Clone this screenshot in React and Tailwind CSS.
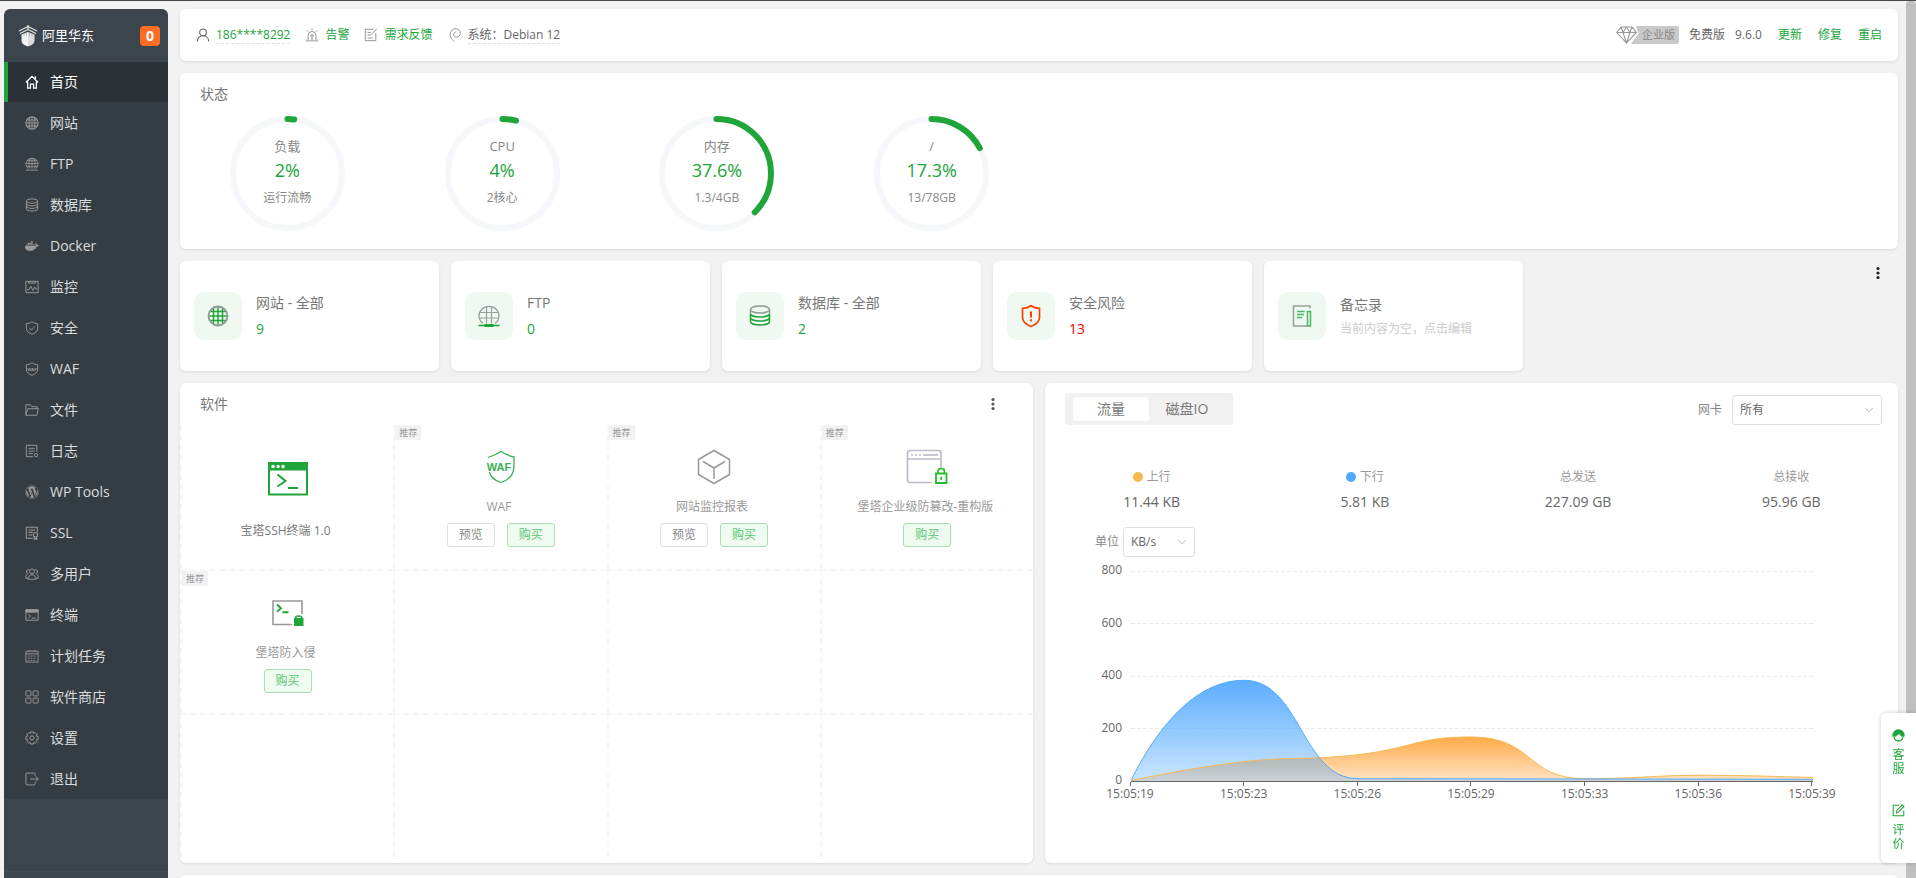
import React, { useState } from 'react';
import { FaDocker, FaWordpress } from 'react-icons/fa';

// --- Icons ---
function Icon({ size = 14, box = 16, width = 1, className = '', children }) {
    return (
        <svg width={size} height={size} viewBox={`0 0 ${box} ${box}`} fill="none" stroke="currentColor" strokeWidth={width} className={`shrink-0 ${className}`} aria-hidden="true">
            {children}
        </svg>
    );
}

const HomeIcon = () => (
    <Icon width={1.5}>
        <path d="M1 8.5 8 1.5l7 7M11.8 1.5v3M3 7.5V15h3.2v-4.5h3.6V15H13V7.5" />
    </Icon>
);

const GlobeIcon = () => (
    <Icon width={1.2}>
        <circle cx="8" cy="8" r="7" />
        <path d="M1 8h14M2 4.5h12M2 11.5h12M8 1v14M4.8 2v12M11.2 2v12" />
    </Icon>
);

const FtpIcon = () => (
    <Icon>
        <path d="M4 13.5a7 6.6 0 1 1 8 0" />
        <path d="M1.2 7.5h13.6M2.5 4.2h11M2.3 11h11.4M8 1v12.5M5 13C4 9 4.200 5 6 1.500M11 13c1-4 .8-8-1-11.500M1 15h14" />
    </Icon>
);

const DatabaseIcon = () => (
    <Icon width={1.1}>
        <ellipse cx="8" cy="3.500" rx="6.500" ry="2.400" />
        <path d="M1.500 3.500v9c0 1.300 2.900 2.400 6.500 2.400s6.500-1.100 6.500-2.400v-9M1.500 6.500c0 1.300 2.900 2.400 6.500 2.400s6.500-1.100 6.500-2.400M1.500 9.500c0 1.300 2.900 2.400 6.500 2.400s6.500-1.100 6.500-2.400" />
    </Icon>
);

const MonitorIcon = () => (
    <Icon width={1.1}>
        <path d="M1 1.500h14v13H1zM4 1.500v2h8v-2M2 11h2.500l2-4 2.500 5 2-4 1 2h2" />
    </Icon>
);

const ShieldIcon = () => (
    <Icon width={1.1}>
        <path d="M8 .8C6 2.400 3.800 2.900 1.500 3v5.200c0 3.400 3 5.800 6.500 7 3.500-1.200 6.500-3.600 6.500-7V3C12.200 2.900 10 2.400 8 .8zM4.800 8l2.400 2.300 4.200-4.200" />
    </Icon>
);

const WafIcon = () => (
    <Icon width={1.1}>
        <path d="M8 .8C6 2.400 3.800 2.900 1.500 3v5.200c0 3.400 3 5.800 6.500 7 3.500-1.200 6.500-3.600 6.500-7V3C12.200 2.900 10 2.400 8 .8z" />
        <text x="8" y="10" textAnchor="middle" fill="currentColor" stroke="none" className="font-['Liberation_Sans'] text-[5px] font-bold">WAF</text>
    </Icon>
);

const FolderIcon = () => (
    <Icon width={1.1}>
        <path d="M1 14V2h5l1.500 2.200H14v2.300M1 14h12.500L15.300 6.500H3.200L1 14z" />
    </Icon>
);

const LogIcon = () => (
    <Icon width={1.1}>
        <path d="M13.500 9V1.500H1.500v13H9M4 5h7M4 8h7M4 11h5" />
        <circle cx="12.600" cy="12.700" r="1.900" />
    </Icon>
);

const SslIcon = () => (
    <Icon width={1.2}>
        <path d="M14 7V1.500H1.500v12.500H9M4 4.500h7.500M4 7.300h5M4 10.300h4" />
        <circle cx="12" cy="10" r="2.500" />
        <path d="M10.500 12v3.500L12 14.300l1.500 1.200V12" />
    </Icon>
);

const UsersIcon = () => (
    <Icon width={1.1}>
        <circle cx="8" cy="5" r="2.700" />
        <path d="M3.500 14c0-3 1.800-5 4.500-5s4.500 2 4.500 5zM5 3.200a2.300 2.300 0 1 0-1.600 4.300C1.800 8.300.8 10 .8 12.800h2.700M11 3.200a2.300 2.300 0 1 1 1.600 4.300c1.600.8 2.600 2.500 2.600 5.300h-2.700" />
    </Icon>
);

const TerminalIcon = () => (
    <Icon width={1.1}>
        <path d="M1 2h14v12H1z" />
        <path d="M1 2h14v2.800H1z" fill="currentColor" />
        <path d="M4 7.300l2.500 2L4 11.300M7.800 11.500H12" />
    </Icon>
);

const CalendarIcon = () => (
    <Icon>
        <path d="M1 2.500h14v12.500H1zM1 5.500h14M4.500 1v2.500M8 1v2.500M11.500 1v2.500" />
        <path strokeDasharray="2 1.300" d="M3.200 8h10M3.200 10.500h10M3.200 13h10" />
    </Icon>
);

const AppsIcon = () => (
    <Icon width={1.1}>
        <rect x="1" y="1" width="5.800" height="5.800" rx="1" />
        <rect x="9.200" y="1" width="5.800" height="5.800" rx="1" />
        <rect x="1" y="9.200" width="5.800" height="5.800" rx="1" />
        <rect x="9.200" y="9.200" width="5.800" height="5.800" rx="1" />
    </Icon>
);

const GearIcon = () => (
    <Icon width={1.1}>
        <path d="M6.500 1h3l.5 1.900 1.700-1 2.300 2.200-1 1.800 2 .6v3l-2 .6 1 1.800-2.300 2.200-1.700-1-.5 1.900h-3L6 13.100l-1.700 1L2 11.900l1-1.800-2-.6v-3l2-.6-1-1.800 2.300-2.200 1.700 1z" />
        <circle cx="8" cy="8" r="2.400" />
    </Icon>
);

const ExitIcon = () => (
    <Icon width={1.1}>
        <path d="M11.500 4.500V2.500c0-.8-.5-1.300-1.300-1.300H2.300C1.500 1.200 1 1.700 1 2.500v11c0 .8.500 1.300 1.300 1.300h7.900c.8 0 1.300-.5 1.300-1.300v-2M6 8h9M12.200 5l3 3-3 3" />
    </Icon>
);

const LogoIcon = () => (
    <svg width="20" height="22" viewBox="0 0 20 22" className="shrink-0" aria-hidden="true">
        <path d="M10 1.500 1 6M10 1.500 19 6M10 4.500 2 8.500M10 4.500l8 4M10 0v4" fill="none" stroke="#e4e4e4" strokeWidth="1.300" />
        <path d="M10 7 3.500 9.500v6c0 3 3 5 6.500 6z" fill="#f4f4f4" />
        <path d="M10 7l6.500 2.500v6c0 3-3 5-6.500 6z" fill="#dcdddf" />
        <path d="M6 8.500v3M8.500 8v3M11.500 8v3M14 8.500v3" stroke="#9a9ea2" strokeWidth="0.600" />
    </svg>
);

const DotsIcon = () => (
    <svg width="16" height="20" viewBox="0 0 16 20" fill="currentColor" aria-hidden="true">
        <circle cx="8" cy="5.500" r="1.600" />
        <circle cx="8" cy="10" r="1.600" />
        <circle cx="8" cy="14.500" r="1.600" />
    </svg>
);

const ChevronIcon = () => (
    <svg width="10" height="6" viewBox="0 0 10 6" fill="none" stroke="#b4b8bf" aria-hidden="true">
        <path d="M1 .8l4 4 4-4" />
    </svg>
);

// --- Data ---
const MENU = [
    { label: '首页', icon: <HomeIcon /> },
    { label: '网站', icon: <GlobeIcon /> },
    { label: 'FTP', icon: <FtpIcon /> },
    { label: '数据库', icon: <DatabaseIcon /> },
    { label: 'Docker', icon: <FaDocker size={14} /> },
    { label: '监控', icon: <MonitorIcon /> },
    { label: '安全', icon: <ShieldIcon /> },
    { label: 'WAF', icon: <WafIcon /> },
    { label: '文件', icon: <FolderIcon /> },
    { label: '日志', icon: <LogIcon /> },
    { label: 'WP Tools', icon: <FaWordpress size={14} /> },
    { label: 'SSL', icon: <SslIcon /> },
    { label: '多用户', icon: <UsersIcon /> },
    { label: '终端', icon: <TerminalIcon /> },
    { label: '计划任务', icon: <CalendarIcon /> },
    { label: '软件商店', icon: <AppsIcon /> },
    { label: '设置', icon: <GearIcon /> },
    { label: '退出', icon: <ExitIcon /> },
];

const GAUGES = [
    { label: '负载', percent: 2, note: '运行流畅' },
    { label: 'CPU', percent: 4, note: '2核心' },
    { label: '内存', percent: 37.6, note: '1.3/4GB' },
    { label: '/', percent: 17.3, note: '13/78GB' },
];

const OVERVIEW = [
    {
        title: '网站 - 全部',
        value: '9',
        icon: (
            <Icon size={24} box={24}>
                <path stroke="#20a53a" strokeWidth="1.500" d="M3 12h18M4 7.500h16M4 16.500h16M12 2v20M7.500 4v16M16.500 4v16" />
                <circle cx="12" cy="12" r="9.500" stroke="#8f9a92" strokeWidth="1.800" />
            </Icon>
        ),
    },
    {
        title: 'FTP',
        value: '0',
        icon: (
            <Icon size={24} box={24}>
                <path stroke="#9aa19c" strokeWidth="1.200" d="M6 19.500a10 9.500 0 1 1 12 0M2.500 8.500h19M2 14h20M9.500 2.500v17M14.500 2.500v17" />
                <path stroke="#20a53a" strokeWidth="1.600" d="M1.500 21.500h21" />
                <path stroke="#20a53a" strokeWidth="3" d="M7.500 21.500h9" />
            </Icon>
        ),
    },
    {
        title: '数据库 - 全部',
        value: '2',
        icon: (
            <Icon size={24} box={24} width={1.500}>
                <ellipse cx="12" cy="5.500" rx="9.500" ry="3.500" stroke="#8f9a92" />
                <path stroke="#8f9a92" d="M2.500 5.500v4M21.500 5.500v4" />
                <path stroke="#20a53a" d="M2.500 9.500c0 2 4 3.500 9.500 3.500s9.500-1.500 9.500-3.500M2.500 13.500c0 2 4 3.500 9.500 3.500s9.500-1.500 9.500-3.500M2.500 10v7.500c0 2 4 3.500 9.500 3.500s9.500-1.500 9.500-3.500V10" />
            </Icon>
        ),
    },
    {
        title: '安全风险',
        value: '13',
        danger: true,
        icon: (
            <Icon size={24} box={24} width={1.700} className="text-[#ff3d00]">
                <path d="M12 1.800C9.500 3.600 6.500 4.200 3.500 4.300v9c0 4.500 4 7.500 8.500 9.200 4.500-1.700 8.500-4.700 8.500-9.200v-9C17.500 4.200 14.500 3.600 12 1.800z" />
                <path strokeWidth="2" d="M12 7.500v6M12 15.200v2" />
            </Icon>
        ),
    },
    {
        title: '备忘录',
        note: '当前内容为空，点击编辑',
        icon: (
            <Icon size={24} box={24} width={1.500}>
                <path stroke="#9aa19c" d="M20 4.500V2H3.500v20H17" />
                <path stroke="#4ab861" d="M7 7.500h7.500M7 10.500h7M7 13.500h5M17.500 7.500h3V22h-3z" />
            </Icon>
        ),
    },
];

const SOFTWARE = [
    {
        name: '宝塔SSH终端 1.0',
        installed: true,
        icon: (
            <svg width="40" height="34" viewBox="0 0 40 34" fill="none" stroke="#20a53a" strokeWidth="2" aria-hidden="true">
                <path d="M1 1h38v31.500H1z" />
                <path d="M0 0h40v8.500H0z" fill="#20a53a" stroke="none" />
                <path d="M5 4.500h.1M10 4.500h.1M15 4.500h.1" stroke="#fff" strokeWidth="3.400" strokeLinecap="round" />
                <path d="M9.500 12.500l8 6.500-8 5.500M20 26h10" />
            </svg>
        ),
    },
    {
        name: 'WAF',
        tag: true,
        preview: true,
        icon: (
            <svg width="32" height="34" viewBox="0 0 32 34" fill="none" stroke="#39b054" strokeWidth="1.300" aria-hidden="true">
                <path d="M3 7.500Q11 5 16 1.500q6 4 13 5.500V14q0 8-3 12-4 4.500-10 6.500-6-2-9-5.500-2-2.500-2.500-5" />
                <text x="14" y="21" textAnchor="middle" fill="#39b054" stroke="none" className="font-['Liberation_Sans'] text-[11px] font-bold">WAF</text>
            </svg>
        ),
    },
    {
        name: '网站监控报表',
        tag: true,
        preview: true,
        icon: (
            <svg width="34" height="36" viewBox="0 0 34 36" fill="none" stroke="#999" strokeWidth="1.500" strokeLinejoin="round" aria-hidden="true">
                <path d="M17 1.500l15.500 9v15L17 34.500l-15.500-9v-15zM6 12.500l11 6.500 11-6.500M17 19v11" />
            </svg>
        ),
    },
    {
        name: '堡塔企业级防篡改-重构版',
        tag: true,
        icon: (
            <svg width="42" height="36" viewBox="0 0 42 36" fill="none" stroke="#bdbccd" strokeWidth="1.700" aria-hidden="true">
                <path d="M35 18.500V4q0-2.500-2.500-2.500H4Q1.500 1.500 1.500 4v27q0 2.500 2.500 2.500h22M1.500 10H35" />
                <path strokeDasharray="2 2" d="M5 6h10" />
                <path d="M17 6h15" />
                <path d="M30 24.500h10.500v9.500H30z" stroke="#1fbf26" strokeWidth="1.800" />
                <path d="M32 24v-2q0-2.500 3.200-2.500t3.200 2.500v2M35.200 27.500v3.500" stroke="#1fbf26" strokeWidth="1.600" />
            </svg>
        ),
    },
    {
        name: '堡塔防入侵',
        tag: true,
        icon: (
            <svg width="32" height="26" viewBox="0 0 32 26" fill="none" stroke="#999" strokeWidth="1.600" aria-hidden="true">
                <path d="M30 14V1H1v23.500h19" />
                <path d="M5 4.500l4 3.700-4 3.700M10.500 12.300h6" stroke="#20a53a" strokeWidth="1.900" />
                <path d="M22 18h9.500v8H22z" fill="#20a53a" stroke="none" />
                <path d="M23.500 19v-1q0-2 3.200-2t3.200 2v1" stroke="#20a53a" strokeWidth="1.600" />
            </svg>
        ),
    },
];

const TRAFFIC = [
    { label: '上行', value: '11.44 KB', dot: 'bg-[#f7b851]' },
    { label: '下行', value: '5.81 KB', dot: 'bg-[#52a9ff]' },
    { label: '总发送', value: '227.09 GB' },
    { label: '总接收', value: '95.96 GB' },
];

const TIMES = ['15:05:19', '15:05:23', '15:05:26', '15:05:29', '15:05:33', '15:05:36', '15:05:39'];
const LEVELS = [800, 600, 400, 200, 0];

// --- Layout pieces ---
function Card({ className = '', children }) {
    return <section className={`rounded-md bg-white shadow-[0_1px_3px_rgba(0,0,0,0.1)] ${className}`}>{children}</section>;
}

function Sidebar() {
    const [active, setActive] = useState('首页');

    return (
        <aside className="flex w-41 shrink-0 flex-col overflow-hidden rounded-t-md bg-[#3c444d]">
            <div className="flex h-[53px] shrink-0 items-center pr-2 pl-3.5">
                <LogoIcon />
                <span className="ml-1 text-[13px] text-white">阿里华东</span>
                <span className="ml-auto flex size-5 items-center justify-center rounded-sm bg-[#ff6c24] text-sm font-bold text-white">0</span>
            </div>
            <nav className="flex flex-col gap-px bg-[#353d44]">
                {MENU.map((item) => (
                    <a
                        key={item.label}
                        href="#"
                        onClick={() => setActive(item.label)}
                        className={active === item.label
                            ? 'flex h-10 items-center gap-[11px] border-l-4 border-[#20a53a] bg-[#2c3138] pl-[17px] text-sm text-white'
                            : 'flex h-10 items-center gap-[11px] border-l-4 border-transparent pl-[17px] text-sm text-[#999]'}
                    >
                        {item.icon}
                        <span className={active === item.label ? 'text-white' : 'text-[#d9dbdc]'}>{item.label}</span>
                    </a>
                ))}
            </nav>
            <div className="mt-auto h-[7px] border-t border-[#424c54] bg-[#3c464e]" />
        </aside>
    );
}

function TopBar() {
    return (
        <Card className="flex h-[52px] shrink-0 items-center justify-between px-4 text-xs text-[#666]">
            <div className="flex items-center gap-[15px]">
                <div className="flex items-center gap-1.5">
                    <Icon width={1.300} className="text-[#666]">
                        <circle cx="8" cy="5" r="3.800" />
                        <path d="M1.500 15.500c0-4 2.700-6.700 6.500-6.700s6.500 2.700 6.500 6.700" />
                    </Icon>
                    <a href="#" className="border-b border-dashed border-[#ddd] text-[#20a53a]">186****8292</a>
                </div>
                <a href="#" className="flex items-center gap-1.5 text-[#20a53a]">
                    <Icon className="text-[#888]">
                        <path d="M3.500 14V8.500a4.500 4.500 0 0 1 9 0V14M1 14.700h14M8 .5v2M2 2.500l1.500 1.700M14 2.500l-1.500 1.700M8 10v4" />
                        <circle cx="8" cy="8.700" r="1.400" />
                    </Icon>
                    告警
                </a>
                <a href="#" className="flex items-center gap-1.5 text-[#20a53a]">
                    <Icon className="text-[#888]">
                        <path d="M11 1.500H1.500v13h12V6M4 5h4M4 8h4M4 11.500h6M8.500 7.500l6-6.500" />
                    </Icon>
                    需求反馈
                </a>
                <div className="flex items-center gap-1.5">
                    <Icon className="text-[#888]">
                        <path d="M7 15.500C4 13 2.500 10.500 2.500 7.500 2.500 3.500 5 .8 8.600.8c3.400 0 5.400 2.400 5.400 5.200 0 2.700-2 4.500-4.300 4.500-2 0-3.200-1.300-3.200-3 0-1.800 1.200-3 2.700-2.900" />
                    </Icon>
                    <a href="#" className="border-b border-dashed border-[#ddd]">系统：Debian 12</a>
                </div>
            </div>
            <div className="flex items-center gap-4">
                <div className="flex items-center gap-2.5">
                    <div className="flex items-center">
                        <svg width="26" height="18" viewBox="0 0 26 18" fill="none" stroke="#999" strokeWidth="1.100" aria-hidden="true">
                            <path d="M20 0h6v18H15l7.500-10.500z" fill="#c9c9c9" stroke="none" />
                            <path d="M5 1h11l4.500 5.500L10.500 17 .8 6.500zM.8 6.500h19.700M5 1l2 5.500L10.500 17 14 6.500 16 1M7 6.500 10.500 1 14 6.500" />
                        </svg>
                        <span className="h-[18px] rounded-r-xs bg-[#c9c9c9] pr-1 text-[11px] leading-[18px] text-[#888]">企业版</span>
                    </div>
                    <span>免费版</span>
                    <span>9.6.0</span>
                </div>
                <a href="#" className="text-[#20a53a]">更新</a>
                <a href="#" className="text-[#20a53a]">修复</a>
                <a href="#" className="text-[#20a53a]">重启</a>
            </div>
        </Card>
    );
}

function Gauge({ label, percent, note }) {
    return (
        <div className="grid justify-items-center">
            <svg width="115" height="115" viewBox="0 0 115 115" fill="none" strokeWidth="6" className="col-start-1 row-start-1 -rotate-90" aria-hidden="true">
                <circle cx="57.5" cy="57.5" r="54.5" stroke="#f5f7fb" />
                <circle cx="57.5" cy="57.5" r="54.5" stroke="#20a53a" strokeLinecap="round" pathLength="100" strokeDasharray={`${percent} 100`} />
            </svg>
            <div className="col-start-1 row-start-1 pt-5 text-center text-[#888]">
                <div className="text-[13px] leading-5">{label}</div>
                <div className="text-lg leading-7 text-[#20a53a]">{percent}%</div>
                <div className="text-xs leading-7">{note}</div>
            </div>
        </div>
    );
}

function StatusCard() {
    return (
        <Card className="shrink-0 pt-[11px] pb-4.5">
            <h2 className="px-5 text-sm text-[#777]">状态</h2>
            <div className="mt-3 grid grid-cols-8">
                {GAUGES.map((g) => <Gauge key={g.label} {...g} />)}
            </div>
        </Card>
    );
}

function Overview() {
    return (
        <div className="grid shrink-0 grid-cols-[repeat(5,259fr)_363fr] gap-3">
            {OVERVIEW.map((item) => (
                <Card key={item.title} className="flex h-[110px] items-center gap-3.5 px-3.5">
                    <div className="flex size-12 shrink-0 items-center justify-center rounded-[10px] bg-[#eff8f1]">{item.icon}</div>
                    {item.note ? (
                        <div className="pt-0.5 leading-6">
                            <div className="text-sm leading-6 text-[#777]">{item.title}</div>
                            <div className="text-xs leading-6 text-[#ccc]">{item.note}</div>
                        </div>
                    ) : (
                        <div className="text-sm">
                            <div className="leading-[26px] text-[#777]">{item.title}</div>
                            <div className={item.danger ? 'leading-[26px] text-[#ff0000]' : 'leading-[26px] text-[#20a53a]'}>{item.value}</div>
                        </div>
                    )}
                </Card>
            ))}
            <div className="flex items-start justify-end pt-0.5 pr-3 text-[#222]">
                <button type="button" aria-label="更多"><DotsIcon /></button>
            </div>
        </div>
    );
}

function SoftwareCell({ item, firstRow }) {
    return (
        <div
            className={firstRow
                ? 'relative flex h-36 flex-col items-center border-l-2 border-dashed border-[#f5f6fb]'
                : 'relative flex h-36 flex-col items-center border-t-2 border-l-2 border-dashed border-[#f5f6fb]'}
        >
            {item && (
                <>
                    {item.tag && <span className="absolute top-0 left-0 bg-[#f2f2f2] px-1 text-[9px] leading-[15px] text-[#999]">推荐</span>}
                    <div className={item.installed ? 'mt-9 flex h-9 items-center' : 'mt-6 flex h-9 items-center'}>{item.icon}</div>
                    <div className={item.installed ? 'mt-6 pr-1 text-xs leading-5 text-[#777]' : 'mt-3 pr-1 text-xs leading-5 text-[#999]'}>{item.name}</div>
                    {!item.installed && (
                        <div className="mt-1.5 flex gap-3 text-xs">
                            {item.preview && <button type="button" className="h-6 w-12 rounded-[3px] border border-[#dcdfe6] bg-white text-[#888]">预览</button>}
                            <button type="button" className="h-6 w-12 rounded-[3px] border border-[#a6e0b2] bg-[#effaf1] text-[#57c770]">购买</button>
                        </div>
                    )}
                </>
            )}
        </div>
    );
}

function SoftwareCard() {
    const cells = Array.from({ length: 12 }, (_, i) => SOFTWARE[i]);

    return (
        <Card className="pb-1.5">
            <div className="flex h-[42px] items-center justify-between pr-8 pl-5 text-[#555]">
                <h2 className="text-sm text-[#777]">软件</h2>
                <button type="button" aria-label="更多"><DotsIcon /></button>
            </div>
            <div className="grid grid-cols-4">
                {cells.map((item, i) => <SoftwareCell key={i} item={item} firstRow={i < 4} />)}
            </div>
        </Card>
    );
}

function Select({ id, value, className }) {
    return (
        <div className={`relative flex h-[30px] items-center ${className}`}>
            <select id={id} defaultValue={value} className="size-full appearance-none rounded-[3px] border border-[#dcdfe6] bg-white px-[7px] text-xs text-[#666]">
                <option>{value}</option>
            </select>
            <span className="pointer-events-none absolute right-2"><ChevronIcon /></span>
        </div>
    );
}

function TrafficChart() {
    const up = 'M86 223.500C124 216 160 209 199 204.700C237 200.500 256 202 280 200.500C300 199 306 198.500 313 197.700C370 191 370 180 426 180C490 180 480 221.700 540 221.700C590 221.700 610 218.300 654 218.300C700 218.300 730 219.500 768 220.500';
    const down = 'M86 223.500C110 175 148 123.300 199 123.300C256 123.300 256 221.700 313 221.700L768 222.300';

    return (
        <svg viewBox="0 0 853 260" className="block w-full text-xs" aria-label="流量">
            <defs>
                <linearGradient id="upFill" x1="0" y1="0" x2="0" y2="1">
                    <stop offset="0" stopColor="#ffa63f" stopOpacity="0.95" />
                    <stop offset="1" stopColor="#ffa63f" stopOpacity="0.3" />
                </linearGradient>
                <linearGradient id="downFill" x1="0" y1="0" x2="0" y2="1">
                    <stop offset="0" stopColor="#52a9ff" stopOpacity="0.95" />
                    <stop offset="1" stopColor="#52a9ff" stopOpacity="0.3" />
                </linearGradient>
            </defs>
            {LEVELS.map((level, i) => (
                <g key={level}>
                    <text x="77" y={17 + i * 52.5} textAnchor="end" fill="#666">{level}</text>
                    {level > 0 && <path d={`M86 ${Math.floor(14 + i * 52.5) + 0.5}H768`} stroke="#e9e9e9" strokeDasharray="4 2" />}
                </g>
            ))}
            <path d={`${up}V224H86z`} fill="url(#upFill)" />
            <path d={`${down}V224H86z`} fill="url(#downFill)" />
            <path d={up} fill="none" stroke="#f7b851" />
            <path d={down} fill="none" stroke="#52a9ff" />
            <path d="M86 224.500H768" stroke="#666" />
            {TIMES.map((time, i) => (
                <g key={time}>
                    <path d={`M${Math.floor(85 + i * 113.66) + 0.5} 225v4`} stroke="#666" />
                    <text x={85 + i * 113.66} y="241" textAnchor="middle" fill="#666">{time}</text>
                </g>
            ))}
        </svg>
    );
}

function TrafficCard() {
    const [tab, setTab] = useState('流量');

    return (
        <Card>
            <div className="flex items-start justify-between pt-2.5 pr-4 pl-5">
                <div className="flex rounded-[3px] bg-[#f1f1f1] px-2 py-1">
                    {['流量', '磁盘IO'].map((name) => (
                        <button
                            key={name}
                            type="button"
                            onClick={() => setTab(name)}
                            className={tab === name ? 'h-6 w-19 rounded-[3px] bg-white text-sm text-[#777]' : 'h-6 w-19 rounded-[3px] text-sm text-[#777]'}
                        >
                            {name}
                        </button>
                    ))}
                </div>
                <div className="flex items-center gap-2.5 pt-0.5 text-xs text-[#888]">
                    <label htmlFor="nic">网卡</label>
                    <Select id="nic" value="所有" className="w-[150px]" />
                </div>
            </div>
            <div className="mt-10 grid grid-cols-4 text-center">
                {TRAFFIC.map((item) => (
                    <div key={item.label}>
                        <div className="flex items-center justify-center gap-1 text-xs leading-6 text-[#999]">
                            {item.dot && <span className={`size-2.5 rounded-full ${item.dot}`} />}
                            {item.label}
                        </div>
                        <div className="text-sm leading-[26px] text-[#666]">{item.value}</div>
                    </div>
                ))}
            </div>
            <div className="mt-3 flex items-center gap-1 pl-[50px] text-xs text-[#888]">
                <label htmlFor="unit">单位</label>
                <Select id="unit" value="KB/s" className="w-18" />
            </div>
            <TrafficChart />
        </Card>
    );
}

function FloatingHelp() {
    return (
        <div className="fixed right-0 bottom-[15px] flex h-[150px] w-[35px] flex-col items-center justify-between rounded-l-md bg-white pt-4 pb-3 text-xs leading-[14px] text-[#20a53a] shadow-[0_0_5px_rgba(0,0,0,0.2)]">
            <a href="#" className="flex w-3 flex-col items-center gap-1.5 text-center">
                <Icon size={13}>
                    <path d="M1 9V7.500C1 3.500 4 1 8 1s7 2.500 7 6.500V9h-3C10.500 8 9 6 8.500 5 7.500 7 6 8.500 4 9z" fill="currentColor" />
                    <path strokeWidth="1.600" d="M2.500 10c.8 3 2.800 4.800 5.500 4.800 2.800 0 4.700-1.800 5.500-4.800M7 14.500h3" />
                </Icon>
                客服
            </a>
            <a href="#" className="flex w-3 flex-col items-center gap-1.5 text-center">
                <Icon size={13} width={1.300}>
                    <path d="M9 1.500H1.500v13h13V8M5.500 11l.5-3 6.500-7 2.200 2L8 10z" />
                </Icon>
                评价
            </a>
        </div>
    );
}

export default function App() {
    return (
        <div className="flex h-screen overflow-hidden border-t border-[#4a444e] bg-[#f2f2f2] pl-1 font-['Open_Sans','Noto_Sans_CJK_SC',sans-serif]">
            <div className="flex pt-2">
                <Sidebar />
            </div>
            <main className="flex min-w-0 flex-1 flex-col gap-3 overflow-hidden pt-2 pr-2 pl-3">
                <TopBar />
                <StatusCard />
                <Overview />
                <div className="grid shrink-0 grid-cols-2 gap-3">
                    <SoftwareCard />
                    <TrafficCard />
                </div>
                <Card className="h-20 shrink-0" />
            </main>
            <div className="w-2.5 shrink-0 rounded-t-sm bg-[#c0c0c0]" />
            <FloatingHelp />
        </div>
    );
}
